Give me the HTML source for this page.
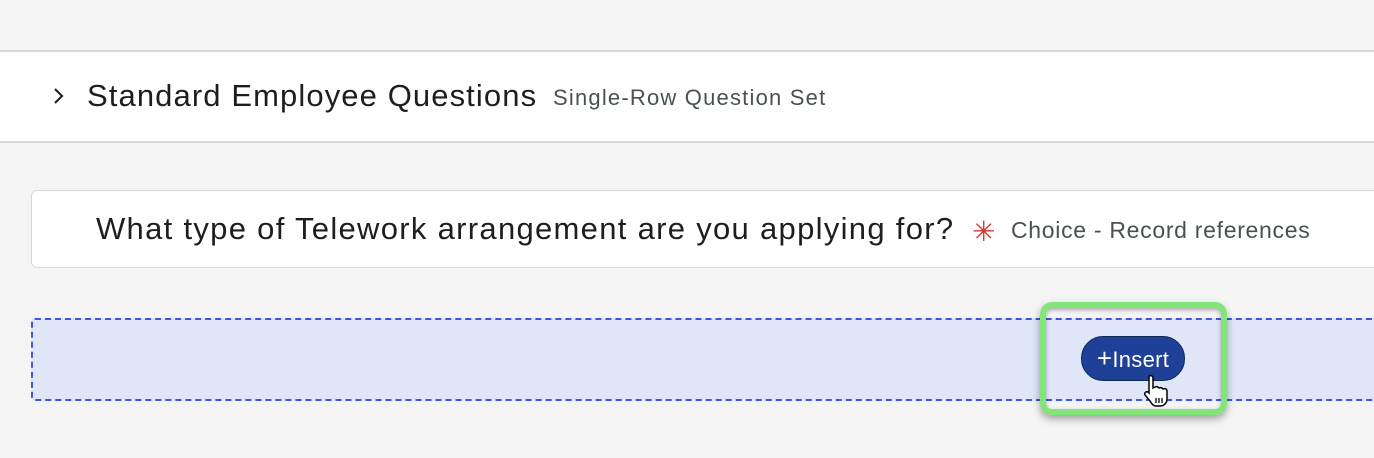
<!DOCTYPE html>
<html><head><style>
body{margin:0;width:1374px;height:458px;background:#f4f5f4;font-family:"Liberation Sans",sans-serif;position:relative;overflow:hidden}
.hdr{position:absolute;left:0;top:50px;width:1374px;height:89px;background:#fff;border-top:2px solid #d6d9d7;border-bottom:2px solid #d6d9d7}
.t1{position:absolute;left:87px;top:78px;font-size:31px;color:#1c1f1e;white-space:nowrap;letter-spacing:1.1px}
.s1{position:absolute;left:553px;top:85px;font-size:22px;color:#4a5250;white-space:nowrap;letter-spacing:1.2px}
.chev{position:absolute;left:52px;top:86px}
.q{position:absolute;left:31px;top:190px;width:1360px;height:76px;background:#fff;border:1.5px solid #d6d9d7;border-radius:6px}
.qt{position:absolute;left:96px;top:211px;font-size:31px;color:#1c1f1e;white-space:nowrap;letter-spacing:1.3px}
.star{position:absolute;left:972px;top:215px;font-size:28px;color:#d23a2e}
.qs{position:absolute;left:1011px;top:217px;font-size:23px;color:#4a5250;white-space:nowrap;letter-spacing:0.7px}
.dz{position:absolute;left:31px;top:318px;width:1360px;height:80px;background:#dfe6f8;border:2px dashed #3f55e0;border-radius:4px;box-sizing:border-box;height:83px}
.hl{position:absolute;left:1040px;top:302px;width:175px;height:101px;border:6px solid #82e57a;border-radius:12px;box-shadow:0 4px 8px rgba(0,0,0,.35), inset 0 2px 4px rgba(0,0,0,.3)}
.btn{position:absolute;left:1081px;top:336px;width:102px;height:43px;background:#1e4097;border:1.5px solid #0d2a55;border-radius:22px;color:#fff;font-size:22px;line-height:43px;text-align:center;letter-spacing:0.3px}
</style></head><body>
<div class="hdr"></div>
<svg class="chev" width="14" height="20" viewBox="0 0 14 20"><path d="M3 3 L10 10 L3 17" fill="none" stroke="#1c1f1e" stroke-width="2"/></svg>
<div class="t1">Standard Employee Questions</div>
<div class="s1">Single-Row Question Set</div>
<div class="q"></div>
<div class="qt">What type of Telework arrangement are you applying for?</div>
<div class="star">✳</div>
<div class="qs">Choice - Record references</div>
<div class="dz"></div>
<div class="hl"></div>
<div class="btn"><span style="font-weight:300;font-size:26px">+</span>Insert</div>
<svg style="position:absolute;left:1143px;top:374px" width="30" height="34" viewBox="0 0 30 34"><path d="M6 2 C8 1 10 2 10 4 L10 14 L12 13 C14 12 15 13 16 14 C18 13 19 14 20 15 C22 14 24 15 24 17 L24 25 C24 29 21 32 17 32 L13 32 C10 32 9 30 7 27 L2 21 C1 19 3 17 5 18 L6 19 Z" fill="#fff" stroke="#000" stroke-width="1.5"/><path d="M13 24v5M16 24v5M19 24v5" stroke="#000" stroke-width="1.3"/></svg>
</body></html>
